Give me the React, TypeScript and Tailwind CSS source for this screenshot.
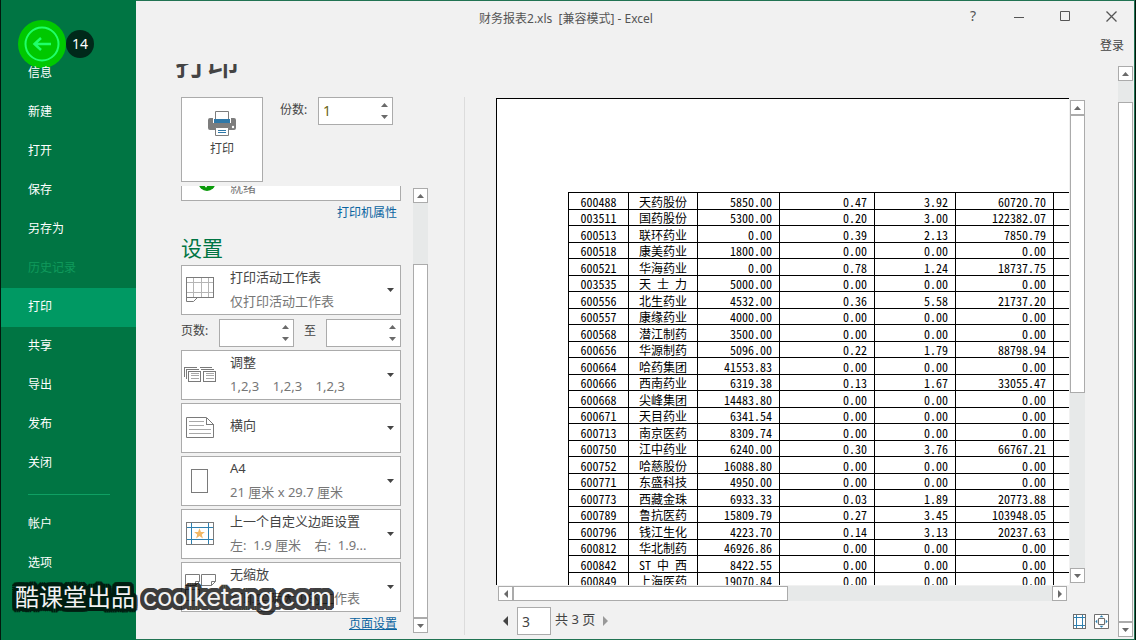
import type { CSSProperties, ReactNode } from "react";

const NAV = ["信息", "新建", "打开", "保存", "另存为", "历史记录", "打印", "共享", "导出", "发布", "关闭"];
const NAV_BOTTOM = ["帐户", "选项"];

const ROWS: string[][] = [
  ["600488", "天药股份", "5850.00", "0.47", "3.92", "60720.70"],
  ["003511", "国药股份", "5300.00", "0.20", "3.00", "122382.07"],
  ["600513", "联环药业", "0.00", "0.39", "2.13", "7850.79"],
  ["600518", "康美药业", "1800.00", "0.00", "0.00", "0.00"],
  ["600521", "华海药业", "0.00", "0.78", "1.24", "18737.75"],
  ["003535", "天 士 力", "5000.00", "0.00", "0.00", "0.00"],
  ["600556", "北生药业", "4532.00", "0.36", "5.58", "21737.20"],
  ["600557", "康缘药业", "4000.00", "0.00", "0.00", "0.00"],
  ["600568", "潜江制药", "3500.00", "0.00", "0.00", "0.00"],
  ["600656", "华源制药", "5096.00", "0.22", "1.79", "88798.94"],
  ["600664", "哈药集团", "41553.83", "0.00", "0.00", "0.00"],
  ["600666", "西南药业", "6319.38", "0.13", "1.67", "33055.47"],
  ["600668", "尖峰集团", "14483.80", "0.00", "0.00", "0.00"],
  ["600671", "天目药业", "6341.54", "0.00", "0.00", "0.00"],
  ["600713", "南京医药", "8309.74", "0.00", "0.00", "0.00"],
  ["600750", "江中药业", "6240.00", "0.30", "3.76", "66767.21"],
  ["600752", "哈慈股份", "16088.80", "0.00", "0.00", "0.00"],
  ["600771", "东盛科技", "4950.00", "0.00", "0.00", "0.00"],
  ["600773", "西藏金珠", "6933.33", "0.03", "1.89", "20773.88"],
  ["600789", "鲁抗医药", "15809.79", "0.27", "3.45", "103948.05"],
  ["600796", "钱江生化", "4223.70", "0.14", "3.13", "20237.63"],
  ["600812", "华北制药", "46926.86", "0.00", "0.00", "0.00"],
  ["600842", "ST 中 西", "8422.55", "0.00", "0.00", "0.00"],
  ["600849", "上海医药", "19070.84", "0.00", "0.00", "0.00"],
];

type Dir = "up" | "down" | "left" | "right";

const ARROWS: Record<Dir, string> = {
  up: "M0 4 L3.5 0 L7 4Z",
  down: "M0 0 L3.5 4 L7 0Z",
  left: "M5 0 L0 5 L5 10Z",
  right: "M0 0 L5 5 L0 10Z",
};

function Arrow({ dir, small = false }: { dir: Dir; small?: boolean }) {
  const vertical = dir === "up" || dir === "down";
  return (
    <svg
      aria-hidden="true"
      className={vertical ? "h-1 w-[7px]" : small ? "h-2 w-1" : "h-2.5 w-[5px]"}
      viewBox={vertical ? "0 0 7 4" : "0 0 5 10"}
      fill="currentColor"
    >
      <path d={ARROWS[dir]} />
    </svg>
  );
}

function ScrollBar({
  label,
  before,
  thumb,
  after,
  horizontal = false,
}: {
  label: string;
  before: number;
  thumb: number;
  after: number;
  horizontal?: boolean;
}) {
  const grow = (n: number): CSSProperties => ({ flexGrow: n });
  const button =
    "flex size-[15px] shrink-0 items-center justify-center border border-[#ababab] bg-white text-[#6a6a6a]";
  return (
    <div
      aria-label={label}
      role="group"
      className={horizontal ? "flex h-[15px] bg-[#e7e9e9]" : "flex w-[15px] shrink-0 flex-col bg-[#e7e9e9]"}
    >
      <button type="button" aria-label={horizontal ? "向左" : "向上"} className={button}>
        <Arrow dir={horizontal ? "left" : "up"} small />
      </button>
      <div className="basis-0" style={grow(before)} />
      <div className="basis-0 border border-[#ababab] bg-white" style={grow(thumb)} />
      <div className="basis-0" style={grow(after)} />
      <button type="button" aria-label={horizontal ? "向右" : "向下"} className={button}>
        <Arrow dir={horizontal ? "right" : "down"} small />
      </button>
    </div>
  );
}

function Spinner({ id, value = "" }: { id: string; value?: string }) {
  return (
    <div className="flex h-7 w-[75px] border border-[#ababab] bg-white">
      <input
        id={id}
        type="text"
        inputMode="numeric"
        defaultValue={value}
        className="w-full min-w-0 bg-transparent pl-1 text-sm text-[#6b6414] outline-none"
      />
      <div className="flex w-[11px] shrink-0 flex-col justify-between py-[5px] text-[#6a6a6a]">
        <button type="button" aria-label="增加" className="flex">
          <Arrow dir="up" />
        </button>
        <button type="button" aria-label="减少" className="flex">
          <Arrow dir="down" />
        </button>
      </div>
    </div>
  );
}

function Option({ icon, title, detail, arrow = true }: { icon: ReactNode; title: string; detail?: string; arrow?: boolean }) {
  return (
    <button
      type="button"
      className="flex h-[50px] w-full shrink-0 items-center border border-[#ababab] bg-white text-left text-[13px] leading-6 whitespace-pre"
    >
      <span className="flex h-full w-12 shrink-0 items-start pl-1">{icon}</span>
      <span className={`flex min-w-0 grow flex-col text-[#444] ${detail ? "pb-0.5" : "pb-1.5"}`}>
        <span>{title}</span>
        {detail && <span className="overflow-hidden text-[#767676]">{detail}</span>}
      </span>
      {arrow && (
        <span className="flex w-[13px] shrink-0 text-[#444]">
          <Arrow dir="down" />
        </span>
      )}
    </button>
  );
}

const iconProps = {
  width: 34,
  height: 48,
  viewBox: "0 0 34 48",
  fill: "none",
  stroke: "#7a7a7a",
  overflow: "visible",
  "aria-hidden": true,
  shapeRendering: "crispEdges",
} as const;

const ReadyIcon = (
  <svg {...iconProps} stroke="none" shapeRendering="auto">
    <circle cx="21" cy="30.5" r="8.5" fill="#0a9a0a" />
    <path d="M17 30 l3 4 5-7" stroke="#fff" strokeWidth="2" />
  </svg>
);

const SheetIcon = (
  <svg {...iconProps}>
    <path d="M1 16.5H27M1 26.5H27M7.5 12V31M15.5 12V31M22.5 12V31" stroke="#b5b5b5" />
    <path d="M0.5 11.5 H27.5 V31.5 H0.5Z" />
    <path d="M0.5 31.5 V35.5 H7.5 L11.5 31.5" shapeRendering="auto" />
  </svg>
);

const CollateIcon = (
  <svg {...iconProps}>
    <g transform="translate(-2 0)">
      <path d="M0.5 26V16.5H13M2.5 28V18.5H15M15.5 16.5H28M17 18.5H30" />
      <path d="M4.5 20.5H16.5V30.5H4.5ZM19.5 20.5H31.5V30.5H19.5Z" fill="#fff" />
      <path d="M7 22.5H14.5M22 22.5H29.5M7 24.5H14.5M7 27.5H14.5M22 24.5H29.5M22 27.5H29.5" stroke="#a8a8a8" />
    </g>
  </svg>
);

const LandscapeIcon = (
  <svg {...iconProps}>
    <path d="M0.5 13.5H20.5L27.5 20.5V33.5H0.5Z" shapeRendering="auto" />
    <path d="M20.5 13.5V20.5H27.5" />
    <path d="M3 17.5H18M3 21.5H18M3 25.5H25M3 29.5H25" stroke="#a8a8a8" />
  </svg>
);

const PaperIcon = (
  <svg {...iconProps}>
    <path d="M5.5 12.5H21.5V35.5H5.5Z" />
  </svg>
);

const MarginIcon = (
  <svg {...iconProps}>
    <path d="M0.5 12.5H27.5V34.5H0.5Z" />
    <path d="M5.5 13V34M22.5 13V34M1 17.5H27M1 29.5H27" stroke="#2e80b0" />
    <path
      d="M13.5 18.2l1.4 3.7 4 .1-3.1 2.5 1.1 3.9-3.4-2.3-3.4 2.3 1.1-3.9-3.1-2.5 4-.1z"
      fill="#f2b866"
      stroke="none"
      shapeRendering="auto"
    />
  </svg>
);

const ScaleIcon = (
  <svg {...iconProps}>
    <g transform="translate(-1 0)" shapeRendering="auto">
      <path d="M0.5 11.5H14.5V18.5L10.5 22.5H0.5ZM10.5 22.5V18.5H14.5" />
      <path d="M16.5 11.5H30.5V18.5L26.5 22.5H16.5ZM26.5 22.5V18.5H30.5" />
      <path d="M0.5 26.5H14.5V33.5L10.5 37.5H0.5ZM10.5 37.5V33.5H14.5" />
    </g>
  </svg>
);

function PrinterIcon() {
  return (
    <svg aria-hidden="true" width="28" height="25" viewBox="0 0 28 25" fill="none">
      <path d="M0 9q0-2 2-2h3v5h18V7h3q2 0 2 2v8q0 2-2 2H2q-2 0-2-2z" fill="#7d7d7d" />
      <path d="M7.5 0.5h13V12h-13z" fill="#fff" stroke="#7d7d7d" />
      <path d="M6 8h16v4H6z" fill="#2f78a8" />
      <path d="M7.5 16.5h13v8h-13z" fill="#fff" stroke="#7d7d7d" />
      <path d="M10 19.5h8M10 21.5h8" stroke="#2f78a8" />
      <circle cx="25" cy="16" r="1.2" fill="#fff" />
    </svg>
  );
}

function NavItem({ label }: { label: string }) {
  const tone =
    label === "打印" ? "bg-[#009963] text-white" : label === "历史记录" ? "text-[#109a5c]" : "text-white";
  return (
    <li>
      <a href="#" className={`flex h-[39px] items-center pb-0.5 pl-[27px] text-xs leading-4 ${tone}`}>
        {label}
      </a>
    </li>
  );
}

function Sidebar() {
  return (
    <nav aria-label="文件" className="flex w-[136px] shrink-0 flex-col border-l border-[#03190d] bg-[#007543]">
      <div className="flex h-[54px] items-start pt-5 pl-[17px]">
        <button
          type="button"
          aria-label="返回"
          className="flex size-12 shrink-0 items-center justify-center rounded-full bg-[#00c800] text-[#1fff6a]"
        >
          <svg aria-hidden="true" width="36" height="36" viewBox="0 0 36 36" fill="none" stroke="currentColor" strokeWidth="2">
            <circle cx="18" cy="18" r="16.5" />
            <path d="M27 18H11M17 12l-6.5 6 6.5 6" strokeWidth="2.5" />
          </svg>
        </button>
        <span className="mt-2.5 flex size-7 shrink-0 items-center justify-center rounded-full bg-[#00291a] text-sm leading-none text-white">
          14
        </span>
      </div>
      <ul>
        {NAV.map((label) => (
          <NavItem key={label} label={label} />
        ))}
      </ul>
      <hr className="mt-[11px] mr-[26px] mb-2.5 ml-[27px] border-[#0fa063]" />
      <ul>
        {NAV_BOTTOM.map((label) => (
          <NavItem key={label} label={label} />
        ))}
      </ul>
    </nav>
  );
}

function TitleBar() {
  const button = "flex h-[34px] w-[46px] items-center justify-center text-[#555]";
  return (
    <header className="shrink-0 text-[#555]">
      <div className="flex">
        <div className="flex grow items-center justify-center pt-0.5 pl-[46px] text-xs whitespace-pre">
          {"财务报表2.xls  [兼容模式] - Excel"}
        </div>
        <button type="button" aria-label="帮助" className={`${button} pb-1 text-sm`}>
          ?
        </button>
        <button type="button" aria-label="最小化" className={`${button} pb-0.5`}>
          <svg aria-hidden="true" width="11" height="11" viewBox="0 0 11 11" stroke="currentColor">
            <path d="M0 5.5H10" />
          </svg>
        </button>
        <button type="button" aria-label="最大化" className={`${button} pb-1`}>
          <svg aria-hidden="true" width="11" height="11" viewBox="0 0 11 11" fill="none" stroke="currentColor">
            <path d="M0.5 0.5H9.5V9.5H0.5Z" />
          </svg>
        </button>
        <button type="button" aria-label="关闭" className={`${button} pb-1`}>
          <svg aria-hidden="true" width="11" height="11" viewBox="0 0 11 11" stroke="currentColor" strokeWidth="1.3">
            <path d="M0.5 0.5L10.5 10.5M10.5 0.5L0.5 10.5" />
          </svg>
        </button>
      </div>
      <div className="flex h-[29px] items-start justify-end pt-0.5 pr-2.5 text-xs text-[#444]">
        <a href="#" className="leading-[18px]">登录</a>
      </div>
    </header>
  );
}

function PrintPanel() {
  return (
    <section className="flex shrink-0 flex-col pb-1.5 pl-[39px]">
      <div className="h-[33px] overflow-hidden">
        <h1 className="-mt-[17px] text-[32px] leading-8 font-medium text-[#444]">打印</h1>
      </div>
      <div className="flex items-start pl-1.5">
        <button
          type="button"
          className="flex h-[85px] w-[82px] flex-col items-center border border-[#ababab] bg-white pt-[13px] text-xs text-[#444]"
        >
          <PrinterIcon />
          <span className="mt-[5px] leading-4">打印</span>
        </button>
        <label htmlFor="copies" className="w-[55px] pt-1 pl-[17px] text-xs leading-[18px] text-[#444]">
          份数:
        </label>
        <Spinner id="copies" value="1" />
      </div>
      <div className="mt-1 flex min-h-0 flex-1 gap-3 pl-1.5">
        <div className="flex w-[220px] flex-col overflow-hidden">
          <div className="-mt-[35px] shrink-0">
            <Option icon={ReadyIcon} title=" " detail="就绪" arrow={false} />
          </div>
          <a href="#" className="flex h-6 shrink-0 items-center justify-end pr-1 text-xs text-[#0a64a0]">
            打印机属性
          </a>
          <h2 className="flex h-10 shrink-0 items-center pt-1.5 text-[21px] leading-7 text-[#007543]">设置</h2>
          <div className="flex flex-col gap-[3px]">
            <Option icon={SheetIcon} title="打印活动工作表" detail="仅打印活动工作表" />
            <div className="mt-px flex shrink-0 items-center justify-between text-xs text-[#444]">
              <label htmlFor="from" className="w-[38px] pb-1">
                页数:
              </label>
              <Spinner id="from" />
              <label htmlFor="to" className="grow pb-1 text-center">
                至
              </label>
              <Spinner id="to" />
            </div>
            <Option icon={CollateIcon} title="调整" detail="1,2,3    1,2,3    1,2,3" />
            <Option icon={LandscapeIcon} title="横向" />
            <Option icon={PaperIcon} title="A4" detail="21 厘米 x 29.7 厘米" />
            <Option icon={MarginIcon} title="上一个自定义边距设置" detail="左:  1.9 厘米    右:  1.9..." />
            <Option icon={ScaleIcon} title="无缩放" detail="打印实际大小的工作表" />
          </div>
          <a href="#" className="flex h-6 shrink-0 items-center justify-end pr-1 text-xs text-[#0a64a0] underline">
            页面设置
          </a>
        </div>
        <div className="flex pt-0.5">
          <ScrollBar label="设置滚动条" before={61} thumb={354} after={0} />
        </div>
      </div>
    </section>
  );
}

function Preview() {
  const widths = ["w-[60px]", "w-[69px]", "w-[82px]", "w-[95px]", "w-[81px]", "w-[98px]", "w-[80px]"];
  return (
    <section aria-label="打印预览" className="flex min-w-0 flex-1 flex-col pt-[34px] pr-[33px] pb-1 pl-[31px]">
      <div className="flex min-h-0 flex-1">
        <div className="min-w-0 flex-1 overflow-hidden border-t border-l border-black bg-white pt-[93px] pl-[71px]">
          <table className="w-[566px] table-fixed border-separate border-spacing-0 border-t border-l border-black text-xs leading-[15px] text-black [font-feature-settings:'hwid'] [font-family:'Noto_Sans_CJK_SC',sans-serif]">
            <colgroup>
              {widths.map((w, i) => (
                <col key={i} className={w} />
              ))}
            </colgroup>
            <tbody>
              {ROWS.map((row) => (
                <tr key={row[0]} className="h-[17px] even:h-4">
                  {row.map((cell, i) => (
                    <td
                      key={i}
                      className={
                        i < 2
                          ? "border-r border-b border-black p-0 text-center whitespace-pre"
                          : "border-r border-b border-black p-0 pr-[7px] text-right"
                      }
                    >
                      {cell}
                    </td>
                  ))}
                  <td className="border-b border-black p-0" />
                </tr>
              ))}
            </tbody>
          </table>
        </div>
        <div className="ml-px flex pt-0.5 pb-0.5">
          <ScrollBar label="垂直滚动条" before={0} thumb={277} after={176} />
        </div>
      </div>
      <div className="mt-px mr-[18px] ml-0.5">
        <ScrollBar label="水平滚动条" horizontal before={0} thumb={274} after={265} />
      </div>
      <footer className="-mr-6 mt-1.5 flex h-7 items-center text-[13px] text-[#444]">
        <button type="button" aria-label="上一页" className="mr-[9px] ml-[7px] flex">
          <Arrow dir="left" />
        </button>
        <input
          aria-label="当前页"
          type="text"
          defaultValue="3"
          className="h-7 w-[34px] border border-[#ababab] bg-white pl-1 text-sm outline-none"
        />
        <span className="pb-0.5 pl-1">共 3 页</span>
        <button type="button" aria-label="下一页" className="ml-2 flex text-[#999]">
          <Arrow dir="right" />
        </button>
        <div className="ml-auto flex gap-2">
          <button type="button" aria-label="显示边距">
            <svg aria-hidden="true" width="13" height="15" viewBox="0 0 13 15" fill="none" shapeRendering="crispEdges">
              <path d="M0.5 0.5H12.5V14.5H0.5Z" stroke="#6f6f6f" fill="#fff" />
              <path d="M3.5 1V14M9.5 1V14M1 3.5H12M1 11.5H12" stroke="#2e80b0" />
            </svg>
          </button>
          <button type="button" aria-label="缩放到页面">
            <svg aria-hidden="true" width="15" height="15" viewBox="0 0 15 15" fill="none">
              <path d="M0.5 0.5H14.5V14.5H0.5Z" stroke="#6f6f6f" fill="#fff" />
              <path d="M4.5 4.5H10.5V10.5H4.5Z" stroke="#6f6f6f" />
              <path
                d="M5.5 3.3L7.5 1.3L9.5 3.3ZM5.5 11.7L7.5 13.7L9.5 11.7ZM3.3 5.5L1.3 7.5L3.3 9.5ZM11.7 5.5L13.7 7.5L11.7 9.5Z"
                fill="#2e80b0"
              />
            </svg>
          </button>
        </div>
      </footer>
    </section>
  );
}

function Outlined({ text, size }: { text: string; size: string }) {
  return (
    <span
      data-text={text}
      className={`relative isolate leading-8 before:absolute before:inset-0 before:-z-10 before:text-black before:opacity-75 before:content-[attr(data-text)] before:[text-shadow:4px_0_black,4px_2px_black,3px_3px_black,2px_4px_black,0_4px_black,-2px_4px_black,-3px_3px_black,-4px_2px_black,-4px_0_black,-4px_-2px_black,-3px_-3px_black,-2px_-4px_black,0_-4px_black,2px_-4px_black,3px_-3px_black,4px_-2px_black] ${size}`}
    >
      {text}
    </span>
  );
}

export default function App() {
  return (
    <div className="relative flex h-screen overflow-hidden bg-[#f1f1f1] [font-family:'Noto_Sans','Noto_Sans_CJK_SC',sans-serif]">
      <Sidebar />
      <div className="flex min-w-0 flex-1 border-r border-[#03190d]">
        <main className="flex min-w-0 flex-1 flex-col border-t border-r border-b border-[#217353]">
          <TitleBar />
          <div className="flex min-h-0 flex-1">
            <PrintPanel />
            <div className="mt-[33px] mb-1 ml-9 w-px bg-[#dcdcdc]" />
            <Preview />
            <div className="flex pt-0.5 pr-px pb-0.5">
              <ScrollBar label="窗口滚动条" before={21} thumb={520} after={0} />
            </div>
          </div>
        </main>
      </div>
      <p className="absolute bottom-[26px] left-[15px] flex items-baseline gap-2 whitespace-pre text-[#f2f2f2] [font-family:Inter,'Noto_Sans_CJK_SC',sans-serif]">
        <Outlined text="酷课堂出品" size="text-[24px]" />
        <Outlined text="coolketang.com" size="text-[25px]" />
      </p>
    </div>
  );
}
